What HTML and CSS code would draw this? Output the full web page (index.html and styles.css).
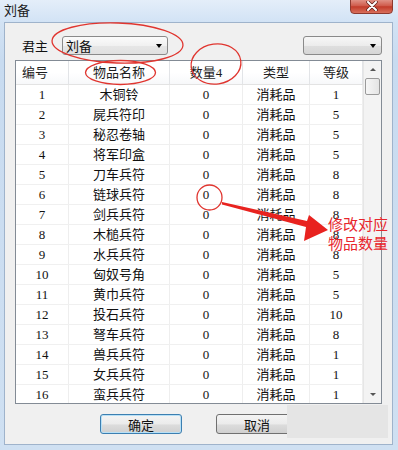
FILE: index.html
```html
<!DOCTYPE html>
<html lang="zh-CN">
<head>
    <meta charset="UTF-8">
    <title>刘备</title>
    <link rel="stylesheet" href="styles.css">
</head>
<body>
    <div class="window">
        <div class="titlebar">
            <span class="title">刘备</span>
            <button class="close">
                <svg width="14" height="10" viewBox="0 0 14 10">
                    <path d="M3 1 L11 9 M11 1 L3 9" stroke="#5a1d18" stroke-width="3.4" stroke-linecap="round"/>
                    <path d="M3 1 L11 9 M11 1 L3 9" stroke="#fff" stroke-width="2" stroke-linecap="round"/>
                </svg>
            </button>
        </div>

        <div class="client">
            <div class="toolbar">
                <span class="label">君主</span>
                <div class="combo lord">
                    <span>刘备</span>
                    <i class="caret"></i>
                </div>
                <div class="combo other">
                    <i class="caret"></i>
                </div>
            </div>

            <div class="list">
                <div class="grid">
                    <div class="row head">
                        <div class="cell left">编号</div>
                        <div class="cell">物品名称</div>
                        <div class="cell">数量4</div>
                        <div class="cell">类型</div>
                        <div class="cell">等级</div>
                    </div>
                    <div class="row"><div class="cell">1</div><div class="cell">木铜铃</div><div class="cell">0</div><div class="cell">消耗品</div><div class="cell">1</div></div>
                    <div class="row"><div class="cell">2</div><div class="cell">屍兵符印</div><div class="cell">0</div><div class="cell">消耗品</div><div class="cell">5</div></div>
                    <div class="row"><div class="cell">3</div><div class="cell">秘忍卷轴</div><div class="cell">0</div><div class="cell">消耗品</div><div class="cell">5</div></div>
                    <div class="row"><div class="cell">4</div><div class="cell">将军印盒</div><div class="cell">0</div><div class="cell">消耗品</div><div class="cell">5</div></div>
                    <div class="row"><div class="cell">5</div><div class="cell">刀车兵符</div><div class="cell">0</div><div class="cell">消耗品</div><div class="cell">8</div></div>
                    <div class="row"><div class="cell">6</div><div class="cell">链球兵符</div><div class="cell">0</div><div class="cell">消耗品</div><div class="cell">8</div></div>
                    <div class="row"><div class="cell">7</div><div class="cell">剑兵兵符</div><div class="cell">0</div><div class="cell">消耗品</div><div class="cell">8</div></div>
                    <div class="row"><div class="cell">8</div><div class="cell">木槌兵符</div><div class="cell">0</div><div class="cell">消耗品</div><div class="cell">8</div></div>
                    <div class="row"><div class="cell">9</div><div class="cell">水兵兵符</div><div class="cell">0</div><div class="cell">消耗品</div><div class="cell">8</div></div>
                    <div class="row"><div class="cell">10</div><div class="cell">匈奴号角</div><div class="cell">0</div><div class="cell">消耗品</div><div class="cell">5</div></div>
                    <div class="row"><div class="cell">11</div><div class="cell">黄巾兵符</div><div class="cell">0</div><div class="cell">消耗品</div><div class="cell">5</div></div>
                    <div class="row"><div class="cell">12</div><div class="cell">投石兵符</div><div class="cell">0</div><div class="cell">消耗品</div><div class="cell">10</div></div>
                    <div class="row"><div class="cell">13</div><div class="cell">弩车兵符</div><div class="cell">0</div><div class="cell">消耗品</div><div class="cell">8</div></div>
                    <div class="row"><div class="cell">14</div><div class="cell">兽兵兵符</div><div class="cell">0</div><div class="cell">消耗品</div><div class="cell">1</div></div>
                    <div class="row"><div class="cell">15</div><div class="cell">女兵兵符</div><div class="cell">0</div><div class="cell">消耗品</div><div class="cell">1</div></div>
                    <div class="row"><div class="cell">16</div><div class="cell">蛮兵兵符</div><div class="cell">0</div><div class="cell">消耗品</div><div class="cell">1</div></div>
                </div>
                <div class="scrollbar">
                    <div class="arrow up"></div>
                    <div class="thumb"></div>
                    <div class="track"></div>
                    <div class="arrow down"></div>
                </div>
            </div>

            <div class="actions">
                <button class="btn default">确定</button>
                <button class="btn">取消</button>
            </div>
        </div>

        <!-- cover patch over the lower right corner -->
        <div class="patch"></div>

        <!-- red hand-drawn marks -->
        <svg class="marks" width="398" height="450" viewBox="0 0 398 450">
            <g fill="none" stroke="#e0352f" stroke-width="1.3">
                <ellipse cx="117.5" cy="43" rx="65.5" ry="20" transform="rotate(2 117.5 43)"/>
                <ellipse cx="120.5" cy="72.5" rx="35" ry="12"/>
                <ellipse cx="216" cy="64" rx="25" ry="20" transform="rotate(-8 216 64)"/>
                <circle cx="209.5" cy="197.5" r="12.5"/>
            </g>
            <polygon fill="#e8221f" points="222,202 307,221 309,215 328,230 304,241 306,227 222,204.5"/>
        </svg>
        <div class="note">修改对应<br>物品数量</div>
    </div>
</body>
</html>
```

FILE: styles.css
```css
body {
    margin: 0;
    background: #fff;
    font-family: "Liberation Serif", "Noto Sans CJK SC", serif;
    font-size: 13px;
    color: #111;
}
.window {
    position: relative;
    width: 398px;
    height: 450px;
    display: flex;
    flex-direction: column;
    background: linear-gradient(#d9e7f6, #c8dbf0 60px, #cfe0f2);
    overflow: hidden;
}
.titlebar {
    height: 22px;
    display: flex;
    align-items: flex-start;
    justify-content: space-between;
    background: linear-gradient(#e4eef9, #d2e3f5);
}
.title {
    font-family: "Noto Sans CJK SC", sans-serif;
    font-size: 13px;
    line-height: 20px;
    margin-left: 4px;
    color: #1b1b1b;
}
.close {
    width: 43px;
    height: 16px;
    margin: -2px 5px 0 0;
    padding: 0;
    border: 1px solid #8d3a30;
    border-radius: 0 0 4px 4px;
    background: linear-gradient(#e39a8f, #cf5a4a 50%, #c23b2a 55%, #d8705c);
    display: flex;
    align-items: center;
    justify-content: center;
}
.client {
    flex: 1;
    margin: 0 5px 5px 4px;
    border: 1px solid #9fb3cb;
    background: #f0f0f0;
    display: flex;
    flex-direction: column;
    padding: 0 10px;
}
.toolbar {
    margin-top: 13px;
    height: 19px;
    display: flex;
    align-items: center;
}
.label {
    font-family: "Noto Sans CJK SC", sans-serif;
    margin-left: 7px;
    width: 40px;
}
.combo {
    height: 19px;
    box-sizing: border-box;
    border: 1px solid #8a8a8a;
    border-radius: 3px;
    background: linear-gradient(#f7f7f7, #ececec 50%, #dedede 55%, #d6d6d6);
    display: flex;
    align-items: center;
    justify-content: space-between;
    padding: 0 5px 0 3px;
}
.combo span {
    font-family: "Noto Sans CJK SC", sans-serif;
    line-height: 17px;
}
.lord {
    width: 106px;
    background: linear-gradient(#fbfbfb, #f1f1f1 50%, #e6e6e6 55%, #e0e0e0);
}
.other {
    width: 79px;
    margin-left: auto;
    justify-content: flex-end;
}
.caret {
    width: 0;
    height: 0;
    border-left: 3.5px solid transparent;
    border-right: 3.5px solid transparent;
    border-top: 4px solid #000;
}
.list {
    margin-top: 5px;
    height: 344px;
    box-sizing: border-box;
    border: 1px solid #838b95;
    background: #fff;
    display: flex;
    overflow: hidden;
}
.grid {
    width: 347px;
    overflow: hidden;
}
.row {
    display: grid;
    grid-template-columns: 53px 101px 73px 67px 53px;
    height: 20px;
    box-sizing: border-box;
    border-bottom: 1px solid #f0f0f0;
}
.row.head {
    height: 24px;
    border-bottom: 1px solid #e3e3e3;
    background: linear-gradient(#fff, #fff 50%, #f7f8fa);
}
.cell {
    text-align: center;
    line-height: 19px;
    border-right: 1px solid #eeeeee;
    white-space: nowrap;
}
.head .cell {
    line-height: 23px;
    border-right-color: #e2e4e7;
    color: #1e1e1e;
}
.cell.left {
    text-align: left;
    padding-left: 6px;
}
.scrollbar {
    width: 17px;
    border-left: 1px solid #e6e6e6;
    background: #f3f3f3;
    display: flex;
    flex-direction: column;
    align-items: center;
}
.arrow {
    height: 17px;
    width: 100%;
    display: flex;
    align-items: center;
    justify-content: center;
}
.arrow::after {
    content: "";
    border-left: 3px solid transparent;
    border-right: 3px solid transparent;
}
.arrow.up::after {
    border-bottom: 3px solid #555;
}
.arrow.down::after {
    border-top: 3px solid #555;
}
.thumb {
    width: 13px;
    height: 15px;
    border: 1px solid #9a9a9a;
    border-radius: 2px;
    background: linear-gradient(90deg, #f6f6f6, #e4e4e4);
}
.track {
    flex: 1;
}
.actions {
    margin-top: 10px;
    padding-left: 85px;
    display: flex;
    gap: 34px;
}
.btn {
    width: 82px;
    height: 20px;
    padding: 0;
    font-family: "Noto Sans CJK SC", sans-serif;
    font-size: 13px;
    color: #111;
    border: 1px solid #707070;
    border-radius: 3px;
    background: linear-gradient(#f4f4f4, #ebebeb 50%, #dcdcdc 55%, #d0d0d0);
}
.btn.default {
    border-color: #3c7fb1;
    box-shadow: inset 0 0 0 1px #b8e0f6;
}
.patch {
    position: absolute;
    left: 287px;
    top: 405px;
    width: 101px;
    height: 33px;
    background: #e5e5e5;
}
.marks {
    position: absolute;
    left: 0;
    top: 0;
    pointer-events: none;
}
.note {
    position: absolute;
    left: 328px;
    top: 214px;
    font-family: "Noto Sans CJK SC", sans-serif;
    font-size: 15px;
    line-height: 19px;
    color: #e8262d;
}
```
